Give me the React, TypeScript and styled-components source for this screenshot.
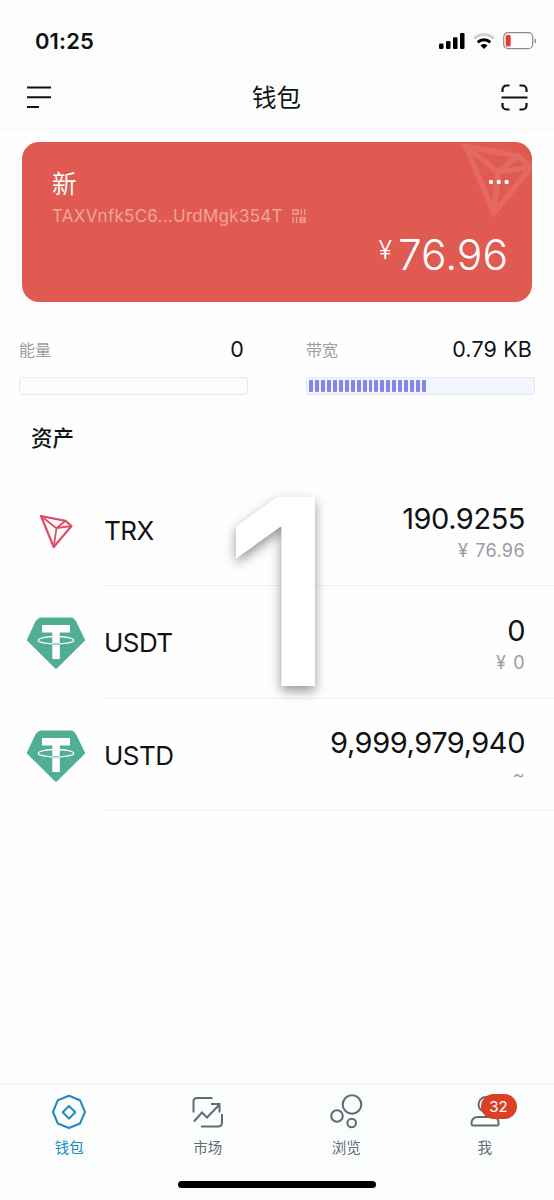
import React from 'react';
import styled, { createGlobalStyle } from 'styled-components';

const GlobalStyle = createGlobalStyle`
  * { box-sizing: border-box; }
  html, body { margin: 0; padding: 0; }
  body {
    background: #fefefe;
    color: #111214;
    font-family: Inter, "Noto Sans CJK SC", sans-serif;
  }
  svg { display: block; flex: none; }
`;

const Screen = styled.div`
  position: relative;
  display: flex;
  flex-direction: column;
  width: 554px;
  height: 1200px;
  overflow: hidden;
`;

const Header = styled.header`
  flex: none;
  height: 130px;
  background: #fbfdfd;
  border-bottom: 1px solid #f3f3f6;
`;

const StatusBar = styled.div`
  display: flex;
  align-items: center;
  justify-content: space-between;
  height: 65px;
  padding: 17px 17px 0 35px;
`;

const Clock = styled.time`
  font-size: 22px;
  font-weight: 600;
  line-height: 24px;
  letter-spacing: 0.1px;
`;

const StatusIcons = styled.div`
  display: flex;
  align-items: center;
  gap: 8px;
`;

const TitleBar = styled.div`
  display: flex;
  align-items: center;
  justify-content: space-between;
  height: 64px;
  padding: 0 26px 0 27px;
`;

const Title = styled.h1`
  margin: 0;
  padding-top: 1px;
  font-size: 24.5px;
  font-weight: 400;
  line-height: 36px;
`;

const Card = styled.section`
  position: relative;
  flex: none;
  display: flex;
  flex-direction: column;
  height: 160px;
  margin: 11.5px 22px 0;
  padding: 24px 24px 0 30px;
  border-radius: 17px;
  background: #e15a51;
  color: #fff;
  overflow: hidden;
`;

const CardMark = styled.svg`
  position: absolute;
  top: 0;
  right: 0;
`;

const MoreDots = styled.svg`
  position: absolute;
  top: 37px;
  right: 22px;
`;

const WalletName = styled.div`
  font-size: 24.5px;
  line-height: 36px;
`;

const Address = styled.div`
  display: flex;
  align-items: center;
  gap: 9px;
  height: 30px;
  margin-top: -1px;
  font-size: 17px;
  letter-spacing: 0.26px;
  color: #f0a49c;
`;

const Balance = styled.div`
  display: flex;
  align-items: flex-start;
  justify-content: flex-end;
  gap: 6px;
  margin-top: -1px;
  font-size: 42.5px;
  font-weight: 350;
  line-height: 50px;
`;

const Currency = styled.span`
  font-size: 25px;
  font-weight: 300;
  line-height: 40px;
`;

const Resources = styled.section`
  display: flex;
  gap: 58px;
  padding: 33.5px 19px 0;
`;

const Resource = styled.div`
  flex: 1;
`;

const ResourceHead = styled.div<{ $inset: number }>`
  display: flex;
  align-items: center;
  justify-content: space-between;
  height: 28px;
  padding-right: ${({ $inset }) => $inset}px;
`;

const ResourceLabel = styled.span`
  font-size: 16px;
  color: #9a9fa6;
`;

const ResourceValue = styled.span`
  font-size: 21.5px;
  letter-spacing: 0.15px;
`;

const Meter = styled.div<{ $active?: boolean }>`
  display: flex;
  align-items: center;
  gap: 2px;
  height: 18px;
  margin-top: 14px;
  padding-left: 2px;
  border: 1px solid ${({ $active }) => ($active ? '#e4e6f6' : '#e6e8ea')};
  border-radius: 3px;
  background: ${({ $active }) => ($active ? '#f3f5fe' : '#fbfcfd')};
`;

const Tick = styled.i`
  width: 3.96px;
  height: 12px;
  border-radius: 1px;
  background: #8484ea;
`;

const SectionTitle = styled.h2`
  margin: 26px 0 0 31px;
  font-size: 21.5px;
  font-weight: 500;
  line-height: 34px;
`;

const AssetList = styled.ul`
  margin: 19px 0 0;
  padding: 0;
  list-style: none;
`;

const Asset = styled.li`
  display: flex;
  height: 112.3px;
`;

const AssetIcon = styled.div`
  display: flex;
  justify-content: center;
  width: 104px;
  padding: 31px 0 0 8px;
`;

const AssetBody = styled.div`
  flex: 1;
  display: flex;
  justify-content: space-between;
  padding-right: 29px;
  border-bottom: 1px solid #eff0f1;
`;

const AssetName = styled.div`
  padding-top: 39px;
  font-size: 26px;
  line-height: 36px;
  letter-spacing: -0.55px;
`;

const AssetValue = styled.div`
  padding-top: 26.5px;
  text-align: right;
`;

const Amount = styled.div`
  font-size: 29px;
  line-height: 36px;
  letter-spacing: -0.45px;
`;

const Fiat = styled.div`
  margin-top: 1px;
  font-size: 18px;
  line-height: 26px;
  letter-spacing: 0.4px;
  word-spacing: 1.5px;
  color: #979ca6;
`;

const StepNumber = styled.div`
  position: absolute;
  left: 224px;
  top: 434px;
  font-size: 260px;
  font-weight: 620;
  line-height: 315px;
  color: #fff;
  text-shadow: 0 5px 12px rgba(0, 0, 0, 0.42);
`;

const TabBar = styled.nav`
  display: flex;
  flex: none;
  height: 117px;
  margin-top: auto;
  border-top: 1px solid #eef0f2;
  background: #fbfdfd;
`;

const Tab = styled.div<{ $active?: boolean }>`
  position: relative;
  flex: 1;
  display: flex;
  flex-direction: column;
  align-items: center;
  padding-top: 10px;
  gap: 7px;
  font-size: 14.5px;
  line-height: 22px;
  color: ${({ $active }) => ($active ? '#2189bf' : '#616c76')};
`;

const Badge = styled.span`
  position: absolute;
  top: 10px;
  left: 65px;
  width: 36px;
  height: 25px;
  border-radius: 13px;
  background: #dc4024;
  color: #fff;
  font-size: 15px;
  line-height: 25px;
  text-align: center;
`;

const HomeIndicator = styled.div`
  position: absolute;
  left: 178px;
  bottom: 12px;
  width: 198px;
  height: 7px;
  border-radius: 4px;
  background: #000;
`;

const SignalIcon = () => (
  <svg width="26" height="16" viewBox="0 0 26 16">
    <rect x="0" y="10.5" width="4.5" height="5.5" rx="1.2" />
    <rect x="7" y="8" width="4.5" height="8" rx="1.2" />
    <rect x="14" y="4.3" width="4.5" height="11.7" rx="1.2" />
    <rect x="21" y="0" width="4.5" height="16" rx="1.2" />
  </svg>
);

const WifiIcon = () => (
  <svg width="22" height="16" viewBox="0 0 22 16" fill="none" strokeWidth="3">
    <path d="M1.2 5.5a14.2 14.2 0 0 1 19.6 0" stroke="#cfd0d0" />
    <path d="M4.7 9.3a9.2 9.2 0 0 1 12.6 0" stroke="#000" />
    <path d="M11 15.9 7.5 12.4a5 5 0 0 1 7 0Z" fill="#000" />
  </svg>
);

const BatteryIcon = () => (
  <svg width="34" height="18" viewBox="0 0 34 18" fill="none">
    <rect x=".7" y=".7" width="29" height="16" rx="4.5" stroke="#8b8b8b" strokeWidth="1.2" />
    <rect x="2.7" y="3" width="5" height="11.5" rx="1.5" fill="#e63c35" />
    <path d="M32 6.8q1.6 2 0 4.2Z" fill="#777" stroke="#777" strokeWidth=".6" />
  </svg>
);

const MenuIcon = () => (
  <svg width="25" height="24" viewBox="0 0 25 24" stroke="#111" strokeWidth="2">
    <path d="M0 2.5h24M0 12.3h24M0 22h12" />
  </svg>
);

const ScanIcon = () => (
  <svg width="27" height="27" viewBox="0 0 27 27" fill="none" stroke="#111" strokeWidth="2.2">
    <path d="M1.5 8V5.5a4 4 0 0 1 4-4H8.5M18.5 1.5h3a4 4 0 0 1 4 4V8M1.5 19v2.5a4 4 0 0 0 4 4H8.5M18.5 25.5h3a4 4 0 0 0 4-4V19M.5 13.5h26" />
  </svg>
);

const QrIcon = () => (
  <svg width="14" height="14" viewBox="0 0 14 14" fill="none" stroke="currentColor" strokeWidth="1.3">
    <path d="M1 1h5v4H1ZM9.3 0v5.6M12.8 0v5.6M1 8v6M4.5 8v6M8 8.7h5v4.5H8ZM8 11h5" />
  </svg>
);

const TronIcon = () => (
  <svg width="34" height="36" viewBox="0 0 34 36" fill="none" stroke="#e04b66" strokeWidth="2.2" strokeLinejoin="round">
    <path d="M2 2 26.500 6.800 32.500 12 14.700 33Z" />
    <path d="M2 2 17.500 14.200 26.500 6.800M17.500 14.200 32.500 12M17.500 14.200 14.700 33" strokeWidth="1.8" />
  </svg>
);

const TetherIcon = () => (
  <svg width="60" height="53" viewBox="0 0 60 53">
    <path d="M15 .5H45.500q2 0 4.500 3.800L59.300 23.300 31.300 51q-1.300 1.300-2.600 0L.7 23.300 9.500 4.300Q12.500.5 15 .5Z" fill="#50ae94" />
    <path d="M16 8h28v7.500H33.800V42H26.300V15.500H16Z" fill="#fff" />
    <ellipse cx="30" cy="23.3" rx="17.7" ry="3.8" fill="none" stroke="#fff" strokeWidth="1.3" />
    <path d="M26.300 26.900q3.700.3 7.500 0" fill="none" stroke="#50ae94" strokeWidth="1" />
  </svg>
);

const WalletIcon = () => (
  <svg width="36" height="36" viewBox="0 0 36 36" fill="none" stroke="currentColor" strokeWidth="2" strokeLinejoin="round">
    <path d="M18 1.700 29 6.200 34 18 29 29.500 18 34 6.800 29.500 2 18 6.800 6.200Z" />
    <path d="M18 12 24.300 18.300 18 24.600 11.700 18.300Z" />
  </svg>
);

const MarketIcon = () => (
  <svg width="36" height="36" viewBox="0 0 36 36" fill="none" stroke="currentColor" strokeWidth="2">
    <path d="M3.500 18.500V7.500q0-3.500 3.500-3.500H22.500M32 20v8.500q0 4-4 4H11M4 27.500 12 18.500 17 23.500 29.500 10.500M21 10h8.500v8.500" />
  </svg>
);

const BrowseIcon = () => (
  <svg width="36" height="36" viewBox="0 0 36 36" fill="none" stroke="currentColor" strokeWidth="2.1">
    <circle cx="24" cy="10.5" r="9.3" />
    <circle cx="9" cy="22" r="5.8" />
    <circle cx="23.7" cy="29" r="4.3" />
  </svg>
);

const ProfileIcon = () => (
  <svg width="36" height="36" viewBox="0 0 36 36" fill="none" stroke="currentColor" strokeWidth="2">
    <circle cx="19" cy="10.5" r="7.5" />
    <path d="M4.500 29.500q0-6.500 6.500-6.500h14.500q6 0 6 6v1q0 1.500-1.500 1.500H6q-1.500 0-1.500-2Z" strokeLinejoin="round" />
  </svg>
);

const assets = [
  { name: 'TRX', amount: '190.9255', fiat: '¥ 76.96', icon: <TronIcon />, tron: true },
  { name: 'USDT', amount: '0', fiat: '¥ 0', icon: <TetherIcon />, tron: false },
  { name: 'USTD', amount: '9,999,979,940', fiat: '~', icon: <TetherIcon />, tron: false },
];

const TronSlot = styled.div`
  padding-top: 9px;
`;

export default function App() {
  return (
    <Screen>
      <GlobalStyle />
      <Header>
        <StatusBar>
          <Clock>01:25</Clock>
          <StatusIcons>
            <SignalIcon />
            <WifiIcon />
            <BatteryIcon />
          </StatusIcons>
        </StatusBar>
        <TitleBar>
          <MenuIcon />
          <Title>钱包</Title>
          <ScanIcon />
        </TitleBar>
      </Header>

      <Card>
        <CardMark width="71" height="80" viewBox="0 0 71 80" fill="none" stroke="#e46961" strokeWidth="5.5">
          <path d="M5 4.500 57 14 70 25 33 71Z" />
          <path d="M5 4.500 37 30 57 14M37 30 70 25M37 30 33 71" />
        </CardMark>
        <MoreDots width="22" height="6" viewBox="0 0 22 6" fill="#fff">
          <circle cx="3" cy="3" r="2.2" />
          <circle cx="10.8" cy="3" r="2.2" />
          <circle cx="18.6" cy="3" r="2.2" />
        </MoreDots>
        <WalletName>新</WalletName>
        <Address>
          TAXVnfk5C6...UrdMgk354T
          <QrIcon />
        </Address>
        <Balance>
          <Currency>¥</Currency>
          76.96
        </Balance>
      </Card>

      <Resources>
        <Resource>
          <ResourceHead $inset={4}>
            <ResourceLabel>能量</ResourceLabel>
            <ResourceValue>0</ResourceValue>
          </ResourceHead>
          <Meter />
        </Resource>
        <Resource>
          <ResourceHead $inset={3}>
            <ResourceLabel>带宽</ResourceLabel>
            <ResourceValue>0.79 KB</ResourceValue>
          </ResourceHead>
          <Meter $active>
            {Array.from({ length: 20 }, (_, i) => (
              <Tick key={i} />
            ))}
          </Meter>
        </Resource>
      </Resources>

      <SectionTitle>资产</SectionTitle>
      <AssetList>
        {assets.map((asset) => (
          <Asset key={asset.name}>
            <AssetIcon>{asset.tron ? <TronSlot>{asset.icon}</TronSlot> : asset.icon}</AssetIcon>
            <AssetBody>
              <AssetName>{asset.name}</AssetName>
              <AssetValue>
                <Amount>{asset.amount}</Amount>
                <Fiat>{asset.fiat}</Fiat>
              </AssetValue>
            </AssetBody>
          </Asset>
        ))}
      </AssetList>

      <StepNumber>1</StepNumber>

      <TabBar>
        <Tab $active>
          <WalletIcon />
          钱包
        </Tab>
        <Tab>
          <MarketIcon />
          市场
        </Tab>
        <Tab>
          <BrowseIcon />
          浏览
        </Tab>
        <Tab>
          <ProfileIcon />
          我
          <Badge>32</Badge>
        </Tab>
      </TabBar>
      <HomeIndicator />
    </Screen>
  );
}
